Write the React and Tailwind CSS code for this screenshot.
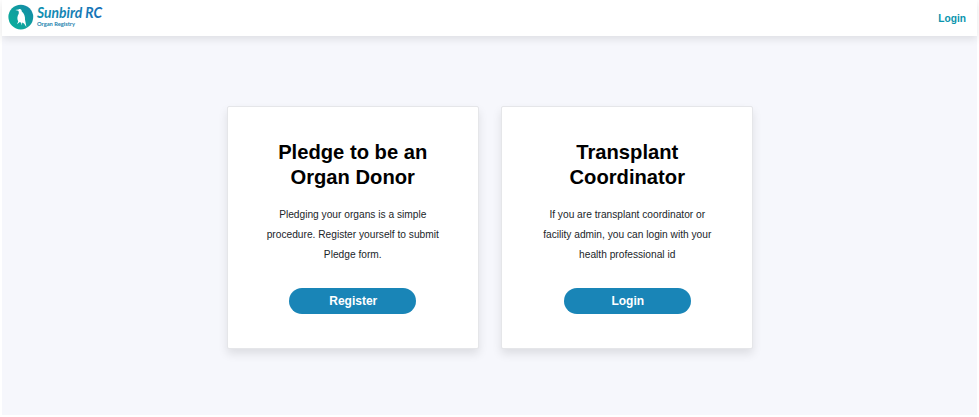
function Logo() {
  return (
    <svg width="120" height="36" viewBox="0 0 120 36" className="overflow-visible" role="img" aria-label="Sunbird RC Organ Registry">
      <defs>
        <linearGradient id="disc" x1="0" y1="1" x2="1" y2="0">
          <stop offset="0" stopColor="#0bb09c" />
          <stop offset="0.5" stopColor="#0fa09e" />
          <stop offset="1" stopColor="#1485aa" />
        </linearGradient>
        <linearGradient id="word" x1="0" y1="0" x2="1" y2="0">
          <stop offset="0" stopColor="#1192b0" />
          <stop offset="1" stopColor="#1670b8" />
        </linearGradient>
      </defs>
      <circle cx="14.8" cy="17.1" r="12.4" fill="url(#disc)" />
      <path
        d="M9.2 9.9 L12.6 9.6 C14.2 8.4 15.8 9.6 15.8 11.6 C18 13.4 19.3 16.4 19 19.6 L20.4 27 L18 23.4 L16.2 22.6 L15.9 25.6 L15.1 22.8 L13.8 22 L11 24.2 L12.2 21.4 C10.9 19.2 11.1 16.4 12.7 13.8 C13 12.4 12.8 11.4 12.2 10.8 Z"
        fill="#fff"
      />
      <text x="31" y="18" textLength="65" lengthAdjust="spacingAndGlyphs" fill="url(#word)" className="font-['Lato',cursive] text-[14.5px] font-bold italic">Sunbird RC</text>
      <text x="31" y="26.4" textLength="38" lengthAdjust="spacingAndGlyphs" fill="#1b82ad" className="font-['Lato',sans-serif] text-[6px] font-bold">Organ Registry</text>
    </svg>
  );
}

function Card({ title, lines, action }) {
  return (
    <section className="flex h-[243px] w-[252px] flex-col items-center rounded-[2px] border border-[#e5e6e9] bg-white pt-[33px] text-center shadow-[0_5px_10px_rgba(0,0,0,0.1)]">
      <h2 className="text-[20.2px] leading-[25px] font-bold text-black">
        {title[0]}<br />{title[1]}
      </h2>
      <p className="mt-[15px] text-[10.2px] leading-[20.2px] text-[#212529]">
        {lines[0]}<br />{lines[1]}<br />{lines[2]}
      </p>
      <button className="mt-[22px] h-[26px] w-[127px] rounded-full bg-[#1985b7] pl-px text-[12px] leading-[26px] font-bold text-white">
        {action}
      </button>
    </section>
  );
}

export default function App() {
  return (
    <div className="flex h-[417px] w-[979px] flex-col overflow-hidden bg-white px-[2px] pb-[2px] font-['Liberation_Sans',Arial,sans-serif]">
      <header className="z-10 flex h-9 shrink-0 items-center justify-between bg-white pr-[11px] pl-1 shadow-[0_3px_8px_rgba(0,0,0,0.1)]">
        <Logo />
        <a className="pt-px text-[10.2px] font-bold text-[#0994ad]">Login</a>
      </header>
      <main className="flex flex-1 justify-center gap-[22.5px] bg-[#f6f7fc] pt-[70px] pl-px">
        <Card
          title={["Pledge to be an", "Organ Donor"]}
          lines={["Pledging your organs is a simple", "procedure. Register yourself to submit", "Pledge form."]}
          action="Register"
        />
        <Card
          title={["Transplant", "Coordinator"]}
          lines={["If you are transplant coordinator or", "facility admin, you can login with your", "health professional id"]}
          action="Login"
        />
      </main>
    </div>
  );
}
